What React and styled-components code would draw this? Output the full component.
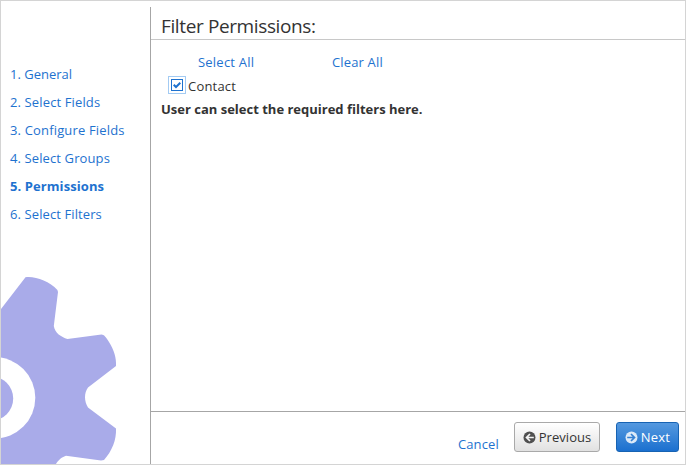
import React from 'react';
import styled, { createGlobalStyle } from 'styled-components';

const GlobalStyle = createGlobalStyle`
  * { box-sizing: border-box; }
  body { margin: 0; background: #fff; }
`;

const Wizard = styled.div`
  display: flex;
  width: 686px;
  height: 465px;
  border: 1px solid #d4d4d4;
  overflow: hidden;
  background: #fff;
  color: #333;
  font: 13px/20px "Open Sans", "Noto Sans", sans-serif;
`;

const Sidebar = styled.aside`
  display: flex;
  flex-direction: column;
  justify-content: space-between;
  width: 149px;
  flex: none;
  padding-top: 59px;
`;

const Steps = styled.ol`
  list-style: none;
  margin: 0;
  padding: 0 0 0 9px;
`;

const Step = styled.li`
  height: 28px;
  line-height: 28px;
  color: #1e72cf;
  white-space: nowrap;
  font-weight: ${(p) => (p.$active ? 700 : 400)};
  letter-spacing: ${(p) => p.$spacing || 0}px;
`;

const Gear = styled.svg`
  display: block;
  flex: none;
`;

const Main = styled.main`
  display: flex;
  flex-direction: column;
  flex: 1;
  margin-top: 6px;
  border-left: 1px solid #a6a6a6;
`;

const Title = styled.h1`
  height: 33px;
  margin: 0;
  padding-left: 10px;
  border-bottom: 1px solid #c8c8c8;
  font-size: 19px;
  font-weight: 400;
  line-height: 38px;
  letter-spacing: ${(p) => p.$spacing}px;
`;

const Content = styled.section`
  flex: 1;
  padding: 12px 10px 0;
`;

const Actions = styled.div`
  display: grid;
  grid-template-columns: 134px auto;
  justify-content: start;
  padding-left: 37px;
  height: 21px;
`;

const Link = styled.a`
  color: #1e72cf;
  white-space: nowrap;
  letter-spacing: ${(p) => p.$spacing || 0}px;
`;

const Option = styled.label`
  display: flex;
  align-items: center;
  gap: 2px;
  height: 26px;
  padding-left: 7px;
  letter-spacing: ${(p) => p.$spacing}px;
`;

const Checkbox = styled.span`
  display: flex;
  align-items: center;
  justify-content: center;
  width: 18px;
  height: 18px;
  margin-bottom: 2px;
  border: 1px solid #a3cbf3;
`;

const CheckFace = styled.span`
  display: flex;
  width: 12px;
  height: 12px;
  border: 1px solid #1e72cf;
`;

const Note = styled.p`
  margin: 0;
  font-weight: 700;
  line-height: 20px;
  white-space: nowrap;
`;

const Footer = styled.footer`
  display: flex;
  align-items: flex-start;
  justify-content: flex-end;
  height: 53px;
  padding: 10px 6px 0 0;
  border-top: 1px solid #a6a6a6;
`;

const CancelLink = styled(Link)`
  margin: 12px 15px 0 0;
`;

const Button = styled.button`
  display: flex;
  align-items: center;
  justify-content: center;
  gap: 3px;
  width: ${(p) => p.$width}px;
  height: 30px;
  margin: 0 0 0 ${(p) => (p.$primary ? 16 : 0)}px;
  padding: 0;
  border: 1px solid ${(p) => (p.$primary ? '#1763b3' : '#a9a9a9')};
  border-radius: 3px;
  background: ${(p) =>
    p.$primary
      ? 'linear-gradient(#5599df, #1b70cf)'
      : 'linear-gradient(#ffffff, #e1e1e1)'};
  color: ${(p) => (p.$primary ? '#fff' : '#333')};
  font: inherit;
  white-space: nowrap;
  letter-spacing: ${(p) => p.$spacing || 0}px;
`;

const steps = [
  { label: '1. General' },
  { label: '2. Select Fields', spacing: 0.13 },
  { label: '3. Configure Fields', spacing: 0.16 },
  { label: '4. Select Groups', spacing: 0.11 },
  { label: '5. Permissions', active: true, spacing: 0.08 },
  { label: '6. Select Filters', spacing: 0.1 },
];

function ArrowCircle({ flip, disc, arrow }) {
  return (
    <svg width="13" height="13" viewBox="0 0 13 13">
      <circle cx="6.5" cy="6.5" r="6" fill={disc} />
      <g transform={flip ? 'translate(13 0) scale(-1 1)' : undefined}>
        <path d="M2.2 6.5H9.2M6 3L9.5 6.5L6 10" fill="none" stroke={arrow} strokeWidth="1.7" />
      </g>
    </svg>
  );
}

export default function App() {
  return (
    <>
      <GlobalStyle />
      <Wizard>
        <Sidebar>
          <Steps>
            {steps.map((s) => (
              <Step key={s.label} $active={s.active} $spacing={s.spacing}>{s.label}</Step>
            ))}
          </Steps>
          <Gear width="117" height="188" viewBox="1 276 117 188">
            <path
              d="M1 309L25.5 277.3C35 276 49 281 57.4 290L58 292L53.8 326C55 333 61 337 67.5 339L101.5 334.5C104 334.6 106 337 109 342C114 350 116.5 358 116 366L88 387.5C84 393 84 401 88 407.5L116 428.5C116.5 440 112 451 104 460L101 460.4L66 455.7C61 457.5 58.5 460 56 464H1Z"
              fill="#a9abe9"
            />
            <circle cx="-5.4" cy="397.8" r="40.7" fill="#fff" />
            <circle cx="-9" cy="398.5" r="22.2" fill="#a9abe9" />
          </Gear>
        </Sidebar>
        <Main>
          <Title $spacing={-0.38}>Filter Permissions:</Title>
          <Content>
            <Actions>
              <Link $spacing={0.22}>Select All</Link>
              <Link $spacing={0.15}>Clear All</Link>
            </Actions>
            <Option $spacing={0.2}>
              <Checkbox>
                <CheckFace>
                  <svg width="10" height="10" viewBox="0 0 10 10">
                    <path d="M1.7 4.8L4 7L8.3 2.8" fill="none" stroke="#1e72cf" strokeWidth="2" />
                  </svg>
                </CheckFace>
              </Checkbox>
              Contact
            </Option>
            <Note>User can select the required filters here.</Note>
          </Content>
          <Footer>
            <CancelLink $spacing={0.15}>Cancel</CancelLink>
            <Button $width={86} $spacing={0.05}>
              <ArrowCircle flip disc="#505050" arrow="#f4f4f4" />
              Previous
            </Button>
            <Button $primary $width={63} $spacing={0.2}>
              <ArrowCircle disc="#dbe9f8" arrow="#3580d2" />
              Next
            </Button>
          </Footer>
        </Main>
      </Wizard>
    </>
  );
}
